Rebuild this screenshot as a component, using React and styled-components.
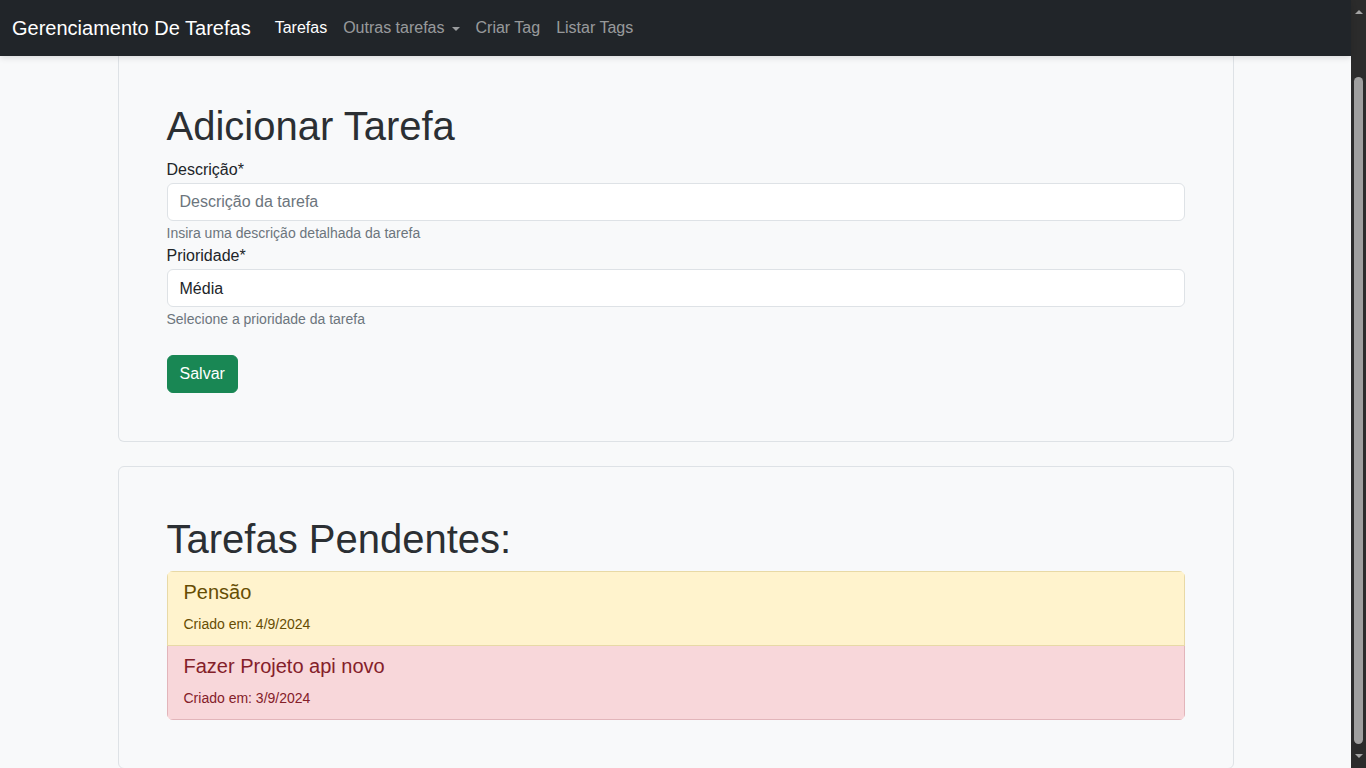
import React from 'react';
import styled, { createGlobalStyle } from 'styled-components';

const GlobalStyle = createGlobalStyle`
  body {
    margin: 0;
    background-color: #f8f9fa;
    color: #212529;
    font-family: "Liberation Sans", Arial, sans-serif;
    font-size: 16px;
    line-height: 1.5;
    overflow: hidden;
  }
  * {
    box-sizing: border-box;
  }
`;

const Shell = styled.div`
  display: flex;
  height: 768px;
`;

const Page = styled.div`
  flex: 1;
  min-width: 0;
  display: flex;
  flex-direction: column;
`;

const ScrollTrack = styled.div`
  width: 15px;
  flex: none;
  background-color: #2b2b2b;
  display: flex;
  flex-direction: column;
  align-items: center;
`;

const Arrow = styled.div`
  width: 0;
  height: 0;
  margin: ${(p) => (p.$down ? '0 0 10px' : '10px 0 0')};
  border-left: 4px solid transparent;
  border-right: 4px solid transparent;
  border-${(p) => (p.$down ? 'top' : 'bottom')}: 4px solid #a3a3a3;
`;

const Thumb = styled.div`
  width: 9px;
  margin: 63px 0 10px;
  flex: 1;
  background-color: #9f9f9f;
  border-radius: 5px;
`;

const Navbar = styled.nav`
  position: relative;
  z-index: 10;
  height: 56px;
  flex: none;
  display: flex;
  align-items: center;
  padding: 0 12px;
  background-color: #212529;
  box-shadow: 0 2px 6px rgba(0, 0, 0, 0.12);
`;

const Brand = styled.a`
  font-size: 20px;
  line-height: 30px;
  color: #ffffff;
  text-decoration: none;
  margin-right: 16px;
`;

const NavList = styled.div`
  display: flex;
  align-items: center;
`;

const NavLink = styled.a`
  padding: 8px;
  font-size: 16px;
  line-height: 24px;
  text-decoration: none;
  color: ${(p) => (p.$active ? '#ffffff' : 'rgba(255, 255, 255, 0.55)')};
  display: flex;
  align-items: center;
`;

const Caret = styled.span`
  display: inline-block;
  margin-left: 7px;
  margin-top: 1px;
  border-top: 4px solid rgba(255, 255, 255, 0.55);
  border-left: 4px solid transparent;
  border-right: 4px solid transparent;
`;

const Container = styled.main`
  width: 100%;
  max-width: 1140px;
  margin: 0 auto;
  padding: 0 12px;
  display: flex;
  flex-direction: column;
  gap: 24px;
`;

const Card = styled.section`
  background-color: #f8f9fa;
  border: 1px solid #dee2e6;
  border-radius: 6px;
  padding: 48px;
  ${(p) =>
    p.$clipped &&
    `
    border-top: none;
    border-top-left-radius: 0;
    border-top-right-radius: 0;
    padding-top: 46px;
  `}
`;

const Title = styled.h1`
  font-size: 40px;
  font-weight: 400;
  line-height: 48px;
  margin: 0 0 8px;
  color: #2b2f33;
`;

const Label = styled.label`
  display: block;
  font-size: 16px;
  line-height: 24px;
  margin-bottom: 1px;
`;

const Input = styled.input`
  display: block;
  width: 100%;
  height: 38px;
  padding: 6px 12px;
  font-family: inherit;
  font-size: 16px;
  color: #212529;
  background-color: #ffffff;
  border: 1px solid #dee2e6;
  border-radius: 6px;
  outline: none;
  &::placeholder {
    color: #6c757d;
  }
`;

const Select = styled.select`
  display: block;
  width: 100%;
  height: 38px;
  padding: 6px 12px;
  font-family: inherit;
  font-size: 16px;
  color: #212529;
  background-color: #ffffff;
  border: 1px solid #dee2e6;
  border-radius: 6px;
  appearance: none;
  outline: none;
`;

const Help = styled.div`
  margin-top: 2px;
  font-size: 14px;
  line-height: 21px;
  color: #6c757d;
`;

const Button = styled.button`
  align-self: flex-start;
  margin-top: 25px;
  height: 38px;
  padding: 6px 12px;
  font-family: inherit;
  font-size: 16px;
  line-height: 24px;
  color: #ffffff;
  background-color: #198754;
  border: 1px solid #198754;
  border-radius: 6px;
  cursor: pointer;
`;

const ListGroup = styled.ul`
  list-style: none;
  margin: 0;
  padding: 0;
  border-radius: 6px;
  overflow: hidden;
`;

const variants = {
  warning: { bg: '#fff3cd', color: '#664d03', border: '#e8d9a6' },
  danger: { bg: '#f8d7da', color: '#842029', border: '#e2b5ba' },
};

const Item = styled.li`
  padding: 8px 16px 9px;
  background-color: ${(p) => variants[p.$variant].bg};
  color: ${(p) => variants[p.$variant].color};
  border: 1px solid ${(p) => variants[p.$variant].border};
  & + & {
    border-top: none;
  }
`;

const ItemTitle = styled.h5`
  margin: 0 0 8px;
  font-size: 20px;
  font-weight: 400;
  line-height: 24px;
`;

const ItemDate = styled.p`
  margin: 0;
  font-size: 14px;
  line-height: 24px;
`;

const tarefas = [
  { id: 1, descricao: 'Pensão', data: '4/9/2024', variant: 'warning' },
  { id: 2, descricao: 'Fazer Projeto api novo', data: '3/9/2024', variant: 'danger' },
];

const App = () => {
  return (
    <>
      <GlobalStyle />
      <Shell>
        <Page>
          <Navbar>
            <Brand href="#">Gerenciamento De Tarefas</Brand>
            <NavList>
              <NavLink href="#" $active>Tarefas</NavLink>
              <NavLink href="#">
                Outras tarefas
                <Caret />
              </NavLink>
              <NavLink href="#">Criar Tag</NavLink>
              <NavLink href="#">Listar Tags</NavLink>
            </NavList>
          </Navbar>
          <Container>
            <Card $clipped>
              <Title>Adicionar Tarefa</Title>
              <Label htmlFor="descricao">Descrição*</Label>
              <Input id="descricao" placeholder="Descrição da tarefa" />
              <Help>Insira uma descrição detalhada da tarefa</Help>
              <Label htmlFor="prioridade">Prioridade*</Label>
              <Select id="prioridade" defaultValue="media">
                <option value="baixa">Baixa</option>
                <option value="media">Média</option>
                <option value="alta">Alta</option>
              </Select>
              <Help>Selecione a prioridade da tarefa</Help>
              <Button type="button">Salvar</Button>
            </Card>
            <Card>
              <Title>Tarefas Pendentes:</Title>
              <ListGroup>
                {tarefas.map((t) => (
                  <Item key={t.id} $variant={t.variant}>
                    <ItemTitle>{t.descricao}</ItemTitle>
                    <ItemDate>Criado em: {t.data}</ItemDate>
                  </Item>
                ))}
              </ListGroup>
            </Card>
          </Container>
        </Page>
        <ScrollTrack>
          <Arrow />
          <Thumb />
          <Arrow $down />
        </ScrollTrack>
      </Shell>
    </>
  );
};

export default App;
